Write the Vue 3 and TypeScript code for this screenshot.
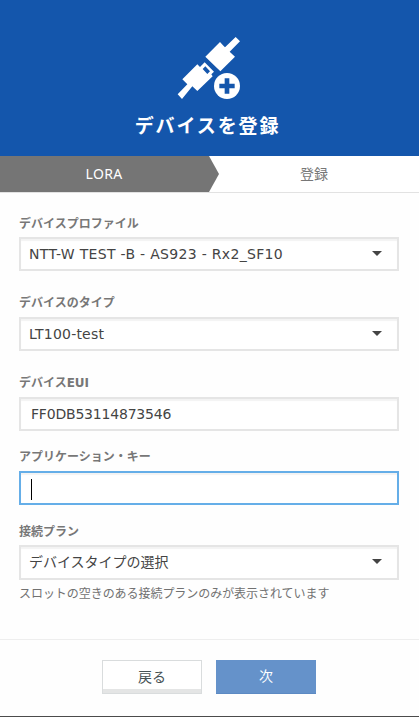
<script setup lang="ts">
interface Field {
  id: string
  label: string
  value: string
  kind: 'select' | 'text'
  focused?: boolean
  hint?: string
}

const fields: Field[] = [
  { id: 'profile', label: 'デバイスプロファイル', value: 'NTT-W TEST -B - AS923 - Rx2_SF10', kind: 'select' },
  { id: 'type', label: 'デバイスのタイプ', value: 'LT100-test', kind: 'select' },
  { id: 'eui', label: 'デバイスEUI', value: 'FF0DB53114873546', kind: 'text' },
  { id: 'key', label: 'アプリケーション・キー', value: '', kind: 'text', focused: true },
  {
    id: 'plan',
    label: '接続プラン',
    value: 'デバイスタイプの選択',
    kind: 'select',
    hint: 'スロットの空きのある接続プランのみが表示されています',
  },
]
</script>

<template>
  <main class="page">
    <header class="hero">
      <svg class="hero-icon" viewBox="0 0 240 225" aria-hidden="true">
        <path d="M106 80L150 36L161 48L165 52L197 21L210 34L179 65L195 80L151 124Z" />
        <path
          fill-rule="evenodd"
          d="M37 148L82 103L90 111L104 97L132 125L124 133L128 139L82 183L67 169L36 207L23 193L52 163ZM106 109L98 117L112 132L120 124Z"
        />
        <circle cx="171" cy="168" r="39" />
        <path class="plus" d="M148 168H194M171 145V191" />
      </svg>
      <h1>デバイスを登録</h1>
    </header>

    <nav class="steps">
      <div class="step active"><span>LORA</span></div>
      <div class="step"><span>登録</span></div>
    </nav>

    <form class="form" @submit.prevent>
      <section v-for="f in fields" :key="f.id" class="field" :class="f.id">
        <div class="label"><span>{{ f.label }}</span></div>
        <div class="control" :class="[f.kind, { focused: f.focused }]">
          <span v-if="f.focused" class="caret"></span>
          <span v-else class="value">{{ f.value }}</span>
          <svg v-if="f.kind === 'select'" class="arrow" viewBox="0 0 10 5" aria-hidden="true">
            <path d="M0 0H10L5 5Z" />
          </svg>
        </div>
        <div v-if="f.hint" class="hint">{{ f.hint }}</div>
      </section>
    </form>

    <footer class="actions">
      <button type="button" class="back">戻る</button>
      <button type="button" class="next">次</button>
    </footer>
  </main>
</template>

<style>
body {
  background: #fff;
  overflow: hidden;
}
</style>

<style scoped>
.page {
  box-sizing: border-box;
  display: flex;
  flex-direction: column;
  width: 419px;
  height: 717px;
  background: #fefefe;
  border-bottom: 1px solid #4b4b4b;
  font-family: 'DejaVu Sans', 'Noto Sans CJK JP', sans-serif;
  color: #444;
}
.hero {
  box-sizing: border-box;
  height: 156px;
  padding-top: 30px;
  display: flex;
  flex-direction: column;
  align-items: center;
  background: #1456ac;
}
.hero-icon {
  width: 80px;
  height: 75px;
  fill: #fff;
}
.plus {
  stroke: #1456ac;
  stroke-width: 14;
}
h1 {
  margin: 5px 4px 0 0;
  font: 700 19px/30px 'Noto Sans CJK JP', sans-serif;
  letter-spacing: 1.9px;
  color: #fff;
}
.steps {
  display: grid;
  grid-template-columns: 219px 200px;
  height: 36px;
  border-bottom: 1px solid #e2e2e2;
  background: #fff;
}
.step {
  display: flex;
  align-items: center;
  justify-content: center;
  padding: 0 10px 2px 0;
  font-family: 'Noto Sans', 'Noto Sans CJK JP', sans-serif;
  font-size: 14px;
  color: #777;
}
.step.active {
  padding-right: 11px;
  letter-spacing: 0.3px;
  background: #757575;
  color: #fff;
  clip-path: polygon(0 0, 209px 0, 100% 50%, 209px 100%, 0 100%);
}
.form {
  box-sizing: border-box;
  height: 446px;
  padding: 22px 20px 0 19px;
  display: flex;
  flex-direction: column;
}
.field {
  height: 80px;
  flex: none;
}
.field.eui,
.field.key {
  height: 74px;
}
.label {
  height: 22px;
  font-size: 12px;
  line-height: 18px;
  font-weight: 700;
  color: #777;
  white-space: nowrap;
}
.type .label,
.eui .label,
.key .label {
  line-height: 16px;
}
.control {
  box-sizing: border-box;
  height: 34px;
  display: flex;
  align-items: center;
  justify-content: space-between;
  border: 2px solid #e5e5e5;
  background: #fff;
  box-shadow: inset 0 2px 1px #f3f3f3;
  padding: 0 15px 0 8px;
  font-size: 14px;
  white-space: nowrap;
}
.profile .control {
  letter-spacing: 0.31px;
}
.type .control {
  letter-spacing: 0.2px;
}
.control.text {
  padding-left: 10px;
  letter-spacing: -0.2px;
}
.control.focused {
  border-color: #65aee8;
}
.caret {
  width: 1px;
  height: 21px;
  margin-top: 3px;
  background: #000;
}
.plan .control {
  height: 35px;
}
.plan .value {
  margin-top: -3px;
}
.arrow {
  width: 10px;
  height: 5px;
  margin-top: -2px;
  fill: #444;
}
.hint {
  margin-top: 5px;
  font-size: 12px;
  line-height: 18px;
  letter-spacing: -0.05px;
  color: #717171;
  white-space: nowrap;
}
.actions {
  box-sizing: border-box;
  height: 77px;
  padding: 20px 1px 0 0;
  border-top: 1px solid #eee;
  display: flex;
  justify-content: center;
  gap: 14px;
}
button {
  box-sizing: border-box;
  width: 100px;
  height: 34px;
  padding: 0 0 3px;
  font: 14px/20px 'Noto Sans CJK JP', sans-serif;
}
.back {
  border: 1px solid #d9dcdd;
  background: #fff;
  box-shadow: inset 0 -4px #e4e5e5;
  color: #465255;
}
.next {
  border: 0;
  border-bottom: 1px solid #5c8ac3;
  background: #6592ca;
  color: #fff;
}
</style>
